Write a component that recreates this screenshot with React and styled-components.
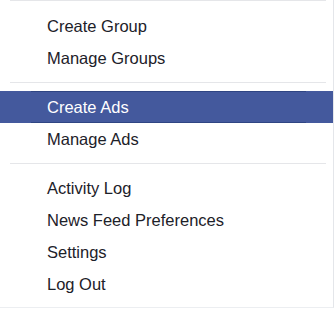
import React from 'react';
import styled, { createGlobalStyle } from 'styled-components';

const GlobalStyle = createGlobalStyle`
  html, body {
    margin: 0;
    padding: 0;
    background: #ffffff;
  }
`;

const Menu = styled.ul`
  list-style: none;
  margin: 0;
  padding: 0 0 7px;
  width: 333px;
  background: #ffffff;
  border-right: 1px solid #e4e6ea;
  border-bottom: 1px solid #eceef1;
  font-family: "Liberation Sans", Arial, sans-serif;
  font-size: 16.5px;
  color: #1d2129;
`;

const Separator = styled.li`
  height: 1px;
  margin: ${props => props.$first ? '0 7px 9px 10px' : '8px 7px 8px 10px'};
  background: #e5e6e9;
`;

const Item = styled.li`
  position: relative;
  height: 32px;
  display: flex;
  align-items: center;
  padding-left: 47px;
  cursor: pointer;
  background: ${props => props.$active ? '#44599d' : 'transparent'};
  color: ${props => props.$active ? '#ffffff' : '#1d2129'};

  &::before {
    content: '';
    display: ${props => props.$active ? 'block' : 'none'};
    position: absolute;
    left: 31px;
    right: 27px;
    top: 0;
    bottom: 0;
    border-top: 1px solid #2f4583;
    border-bottom: 1px solid #2f4583;
  }
`;

const Label = styled.span`
  position: relative;
  line-height: 1;
  padding-top: 1px;
`;

const groups = [
  ['Create Group', 'Manage Groups'],
  ['Create Ads', 'Manage Ads'],
  ['Activity Log', 'News Feed Preferences', 'Settings', 'Log Out'],
];

const App = () => {
  return (
    <>
      <GlobalStyle />
      <Menu>
        {groups.map((group, gi) => (
          <React.Fragment key={gi}>
            <Separator $first={gi === 0} />
            {group.map(label => (
              <Item key={label} $active={label === 'Create Ads'}>
                <Label>{label}</Label>
              </Item>
            ))}
          </React.Fragment>
        ))}
      </Menu>
    </>
  );
};

export default App;
